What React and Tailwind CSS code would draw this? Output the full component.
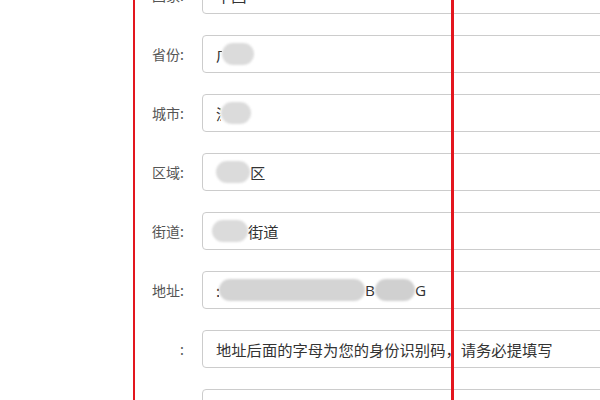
import React from "react";

const font = { fontFamily: '"Noto Sans CJK SC", "Noto Sans", sans-serif' };

// blurred (masked) patch of text
const Blob = ({ w, tone = "bg-[#dbdbdb]" }) => (
  <span className={`inline-block h-[22px] rounded-full ${tone} blur-[1px]`} style={{ width: w }} />
);

// glyph of which only the left sliver shows
const Sliver = ({ ch, w = 5 }) => (
  <span className="inline-block overflow-hidden whitespace-nowrap" style={{ width: w }}>
    {ch}
  </span>
);

const rows = [
  { label: "国家:", value: <span>中国</span> },
  {
    label: "省份:",
    value: (
      <span className="flex items-center">
        <Sliver ch="广" w={6} />
        <Blob w={32} />
      </span>
    ),
  },
  {
    label: "城市:",
    value: (
      <span className="flex items-center">
        <Sliver ch="深" w={5} />
        <Blob w={30} />
      </span>
    ),
  },
  {
    label: "区域:",
    value: (
      <span className="flex items-center">
        <Blob w={34} />
        <span>区</span>
      </span>
    ),
  },
  {
    label: "街道:",
    value: (
      <span className="flex items-center -ml-[4px]">
        <Blob w={36} />
        <span>街道</span>
      </span>
    ),
  },
  {
    label: "地址:",
    value: (
      <span className="flex items-center">
        <Sliver ch=":" w={3} />
        <Blob w={146} tone="bg-[#d4d4d4]" />
        <span style={{ fontFamily: '"Open Sans", sans-serif' }}>B</span>
        <Blob w={40} tone="bg-[#d0d0d0]" />
        <span style={{ fontFamily: '"Open Sans", sans-serif' }}>G</span>
      </span>
    ),
  },
  { label: ":", value: <span>地址后面的字母为您的身份识别码，请务必提填写</span> },
  { label: "邮编:", value: <span /> },
];

export default function App() {
  return (
    <div className="relative w-[600px] h-[400px] overflow-hidden bg-white" style={font}>
      <div className="flex flex-col gap-[21px] mt-[-24px]">
        {rows.map((r, i) => (
          <div key={i} className="flex items-center h-[38px]">
            <div className="w-[184px] shrink-0 text-right text-[14px] text-[#555]">{r.label}</div>
            <div className="ml-[18px] w-[440px] shrink-0 h-[38px] flex items-center px-[13px] border border-[#cccccc] rounded-[4px] text-[15.3px] text-[#333]">
              {r.value}
            </div>
          </div>
        ))}
      </div>
      {/* red marker lines drawn over the form */}
      <div className="absolute top-0 bottom-0 left-[133px] w-[2px] bg-[#e3161e]" />
      <div className="absolute top-0 bottom-0 left-[451px] w-[3px] bg-[#e3161e]" />
    </div>
  );
}
